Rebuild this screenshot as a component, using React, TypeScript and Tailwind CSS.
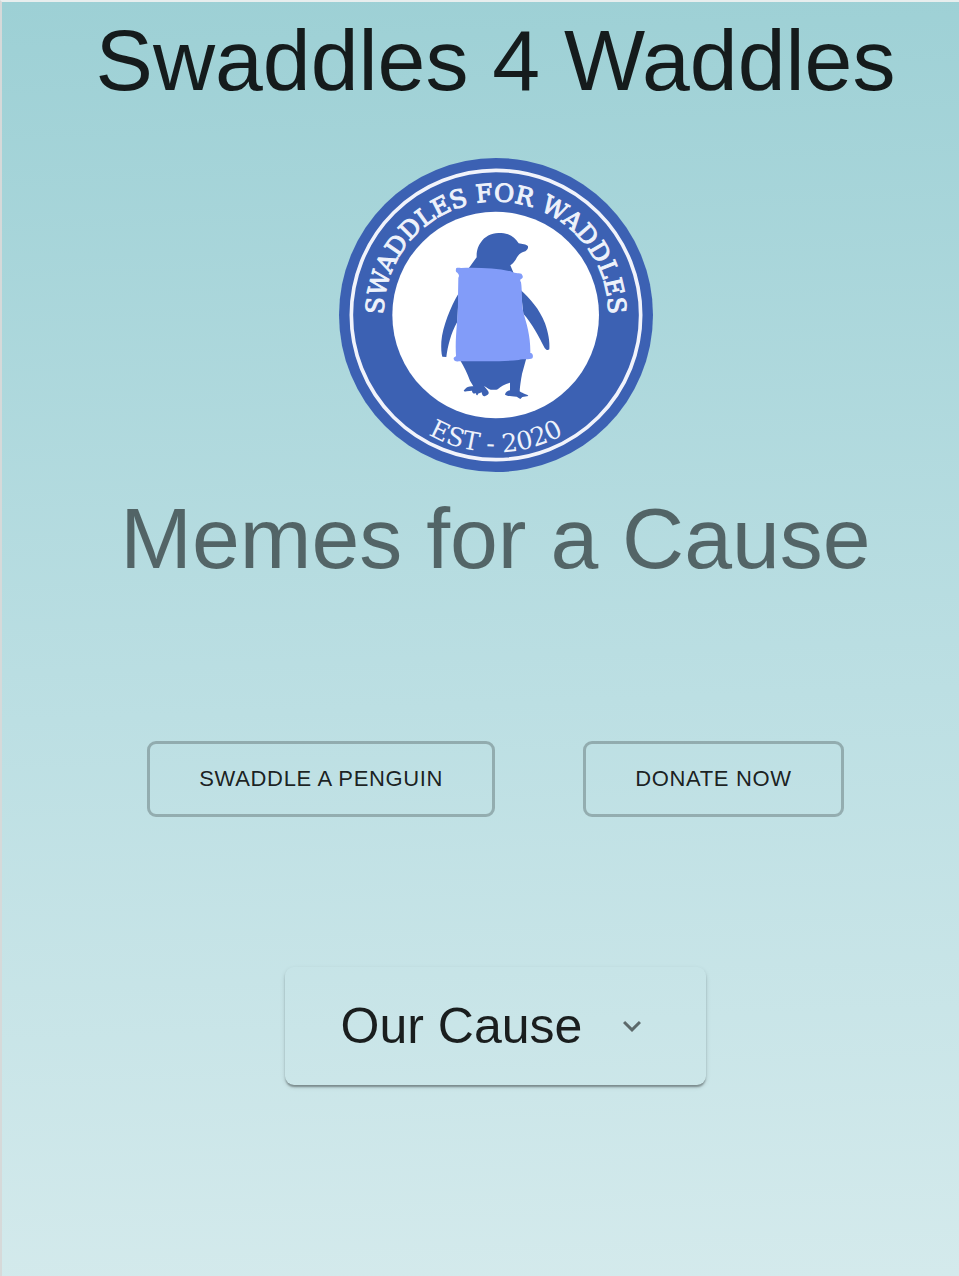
import React, { useState } from "react";

function PenguinLogo() {
  return (
    <svg
      viewBox="27 24 942 942"
      className="size-[314px]"
      role="img"
      aria-label="Swaddles for Waddles"
    >
      <defs>
        <path id="arc-top" d="M163 528 A337 337 0 1 1 833 528" />
        <path id="arc-bottom" d="M86 495 A412 412 0 0 0 910 495" />
      </defs>
      <circle cx="498" cy="495" r="471" fill="#3c61b3" />
      <circle cx="498" cy="495" r="434" fill="none" stroke="#f1f3fb" strokeWidth="11" />
      <circle cx="497" cy="495" r="310" fill="#fff" />
      <g
        fill="#eef2fb"
        stroke="#eef2fb"
        textAnchor="middle"
        fontFamily="'DejaVu Serif', serif"
      >
        <text fontSize="74" strokeWidth="3">
          <textPath href="#arc-top" startOffset="50%">
            SWADDLES FOR WADDLES
          </textPath>
        </text>
        <text fontSize="76" strokeWidth="0">
          <textPath href="#arc-bottom" startOffset="50%">
            EST - 2020
          </textPath>
        </text>
      </g>
      <g fill="#3c61b3">
        <path d="M415 356 L440 322 C439 300 445 286 456 272 C472 254 490 249 514 249 C538 250 554 262 566 280 C576 282 589 282 594 289 C595 295 592 300 586 304 C574 306 566 314 561 322 C555 334 548 342 541 346 L552 372 L480 380 Z" />
        <path d="M386 430 C362 470 338 530 334 575 C333 594 334 610 337 620 L349 621 C353 590 362 550 382 515 Z" />
        <path d="M572 420 C600 446 628 476 645 520 C655 548 660 576 658 598 C653 603 648 599 644 594 C628 562 606 520 580 491 Z" />
        <path d="M390 630 C402 650 412 670 420 692 L430 709 C420 708 408 711 405 718 C398 722 402 726 410 724 L426 722 C426 729 432 733 438 729 C438 737 443 738 444 731 L455 727 C456 737 462 742 467 737 C477 734 479 727 472 720 L462 708 C470 711 474 717 482 719 C490 720 500 720 504 717 C512 710 524 702 540 698 L540 721 C532 722 526 727 525 734 C534 739 544 738 560 740 L571 747 L577 741 L595 738 C592 733 580 732 569 724 C571 700 573 690 576 672 L589 625 Z" />
      </g>
      <path
        fill="#829cf9"
        d="M378 357 C378 352 386 354 393 354 C446 352 500 355 543 364 C551 371 565 369 574 371 C578 375 581 383 575 386 C569 388 570 392 573 397 C577 420 574 455 580 488 C590 520 602 560 601 609 C608 608 611 618 607 625 C598 630 580 626 566 630 C510 636 440 632 386 634 C378 636 370 632 371 624 C372 620 376 622 378 617 C374 560 385 510 384 440 L385 383 C389 377 386 372 382 368 C377 366 377 362 378 357 Z"
      />
    </svg>
  );
}

function OutlineLink({ href, children }: { href: string; children: React.ReactNode }) {
  return (
    <a
      href={href}
      className="rounded-[9px] border-3 border-black/23 px-[49px] py-[17px] text-[22px] leading-9 tracking-[0.03em] uppercase"
    >
      {children}
    </a>
  );
}

export default function App() {
  const [open, setOpen] = useState(false);

  return (
    <div className="min-h-screen border-t-2 border-l-2 border-t-[#e8eeee] border-l-[#d6d9d9] bg-linear-[178deg,#9dd0d5,#bcdfe3_55%,#d4eaec] font-['Liberation_Sans',Arial,sans-serif] text-black/87">
      <main className="flex flex-col items-center pl-[30px]">
        <h1 className="pt-1.5 text-center text-[86px] leading-[104px]">Swaddles 4 Waddles</h1>
        <div className="mt-[46px]">
          <PenguinLogo />
        </div>
        <h2 className="mt-3.5 text-center text-[86px] leading-[104px] text-black/54">
          Memes for a Cause
        </h2>
        <nav className="mt-[151px] flex flex-wrap justify-center gap-[88px]">
          <OutlineLink href="#swaddle">Swaddle a Penguin</OutlineLink>
          <OutlineLink href="#donate">Donate Now</OutlineLink>
        </nav>
        <section className="mt-[150px] rounded-[9px] shadow-[0_3px_2px_-1px_rgba(0,0,0,0.22),0_2px_2px_rgba(0,0,0,0.15),0_2px_5px_rgba(0,0,0,0.12)]">
          <button
            type="button"
            aria-expanded={open}
            onClick={() => setOpen(!open)}
            className="flex items-center gap-8 px-14 py-6"
          >
            <span className="text-[50px] leading-[70px]">Our Cause</span>
            <svg viewBox="0 0 24 24" className="size-9 fill-black/54" aria-hidden="true">
              <path d="M16.59 8.59 12 13.17 7.41 8.59 6 10l6 6 6-6z" />
            </svg>
          </button>
        </section>
      </main>
    </div>
  );
}
